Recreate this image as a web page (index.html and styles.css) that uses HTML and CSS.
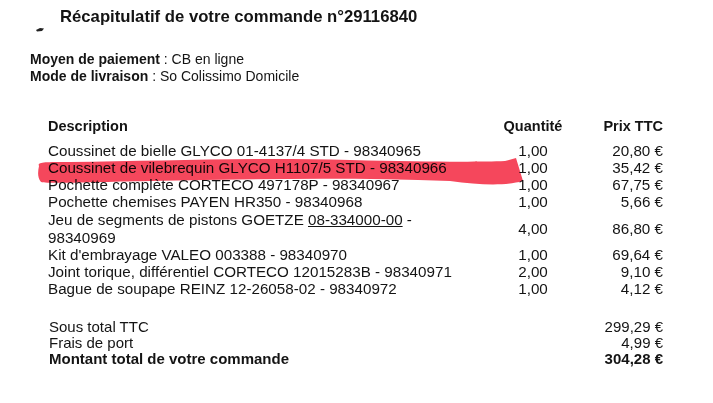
FILE: index.html
```html
<!DOCTYPE html>
<html lang="fr">
<head>
    <meta charset="UTF-8">
    <meta name="viewport" content="width=device-width, initial-scale=1.0">
    <title>Récapitulatif de votre commande</title>
    <link rel="stylesheet" href="styles.css">
</head>
<body>
<div class="sheet">
    <h1 class="title">Récapitulatif de votre commande n°29116840</h1>

    <div class="info">
        <div><b>Moyen de paiement</b> : CB en ligne</div>
        <div><b>Mode de livraison</b> : So Colissimo Domicile</div>
    </div>

    <table class="items">
        <colgroup>
            <col class="col-desc">
            <col class="col-qty">
            <col class="col-price">
        </colgroup>
        <thead>
            <tr>
                <th class="desc">Description</th>
                <th class="qty">Quantité</th>
                <th class="price">Prix TTC</th>
            </tr>
        </thead>
        <tbody>
            <tr>
                <td class="desc">Coussinet de bielle GLYCO 01-4137/4 STD - 98340965</td>
                <td class="qty">1,00</td>
                <td class="price">20,80 €</td>
            </tr>
            <tr>
                <td class="desc">Coussinet de vilebrequin GLYCO H1107/5 STD - 98340966</td>
                <td class="qty">1,00</td>
                <td class="price">35,42 €</td>
            </tr>
            <tr>
                <td class="desc">Pochette complète CORTECO 497178P - 98340967</td>
                <td class="qty">1,00</td>
                <td class="price">67,75 €</td>
            </tr>
            <tr>
                <td class="desc">Pochette chemises PAYEN HR350 - 98340968</td>
                <td class="qty">1,00</td>
                <td class="price">5,66 €</td>
            </tr>
            <tr class="tall">
                <td class="desc">
                    <span class="line">Jeu de segments de pistons GOETZE <u>08-334000-00</u> -</span>
                    <span class="line">98340969</span>
                </td>
                <td class="qty">4,00</td>
                <td class="price">86,80 €</td>
            </tr>
            <tr>
                <td class="desc">Kit d'embrayage VALEO 003388 - 98340970</td>
                <td class="qty">1,00</td>
                <td class="price">69,64 €</td>
            </tr>
            <tr>
                <td class="desc">Joint torique, différentiel CORTECO 12015283B - 98340971</td>
                <td class="qty">2,00</td>
                <td class="price">9,10 €</td>
            </tr>
            <tr>
                <td class="desc">Bague de soupape REINZ 12-26058-02 - 98340972</td>
                <td class="qty">1,00</td>
                <td class="price">4,12 €</td>
            </tr>
        </tbody>
    </table>

    <div class="totals">
        <span>Sous total TTC</span><span class="amount">299,29 €</span>
        <span>Frais de port</span><span class="amount">4,99 €</span>
        <span class="grand">Montant total de votre commande</span><span class="amount grand">304,28 €</span>
    </div>
</div>

<!-- highlighter stroke and scan smudge drawn over the sheet -->
<svg class="marks" width="713" height="403" viewBox="0 0 713 403">
    <path class="marker" d="M39,166 C37,162 44,162 70,162 C160,161 250,157 350,160 C430,162 480,162 505,161 L516,158 L523,181 C505,186 480,185 450,181 C350,177 250,179 150,181 C90,182 50,184 41,182 C37,177 38,171 39,166 Z"/>
    <path class="smudge" d="M36,30 L40,28 L44,28.5 L42,31 L37,31.5 Z"/>
</svg>
</body>
</html>
```

FILE: styles.css
```css
body {
    margin: 0;
    background: #fff;
    color: #141414;
    font-family: "Liberation Sans", Arial, sans-serif;
}
.sheet {
    width: 713px;
    height: 403px;
    overflow: hidden;
}
.title {
    margin: 0 0 0 60px;
    padding-top: 7px;
    font-size: 16.7px;
    line-height: 20px;
    font-weight: bold;
}
.info {
    margin: 24px 0 0 30px;
    font-size: 14px;
    line-height: 17px;
}
.items {
    margin: 33px 0 0 48px;
    width: 615px;
    border-collapse: collapse;
    table-layout: fixed;
    font-size: 15.2px;
    line-height: 17px;
}
.col-desc { width: 415px; }
.col-qty { width: 140px; }
.col-price { width: 60px; }
.items th,
.items td {
    padding: 0;
    vertical-align: middle;
}
.items th {
    padding-bottom: 7px;
    font-size: 14.5px;
    font-weight: bold;
}
.items .desc { text-align: left; }
.items .qty { text-align: center; }
.items .price {
    text-align: right;
    white-space: nowrap;
}
.items .tall .desc {
    padding-top: 1px;
    line-height: 17.5px;
}
.items .line {
    display: block;
}
.totals {
    margin: 22px 0 0 49px;
    width: 614px;
    display: grid;
    grid-template-columns: 1fr auto;
    font-size: 15px;
    line-height: 16px;
}
.totals .amount { text-align: right; }
.totals .grand { font-weight: bold; }
.marks {
    position: absolute;
    left: 0;
    top: 0;
    pointer-events: none;
}
.marker {
    fill: #f5475c;
    mix-blend-mode: multiply;
}
.smudge {
    fill: #222;
}
```
